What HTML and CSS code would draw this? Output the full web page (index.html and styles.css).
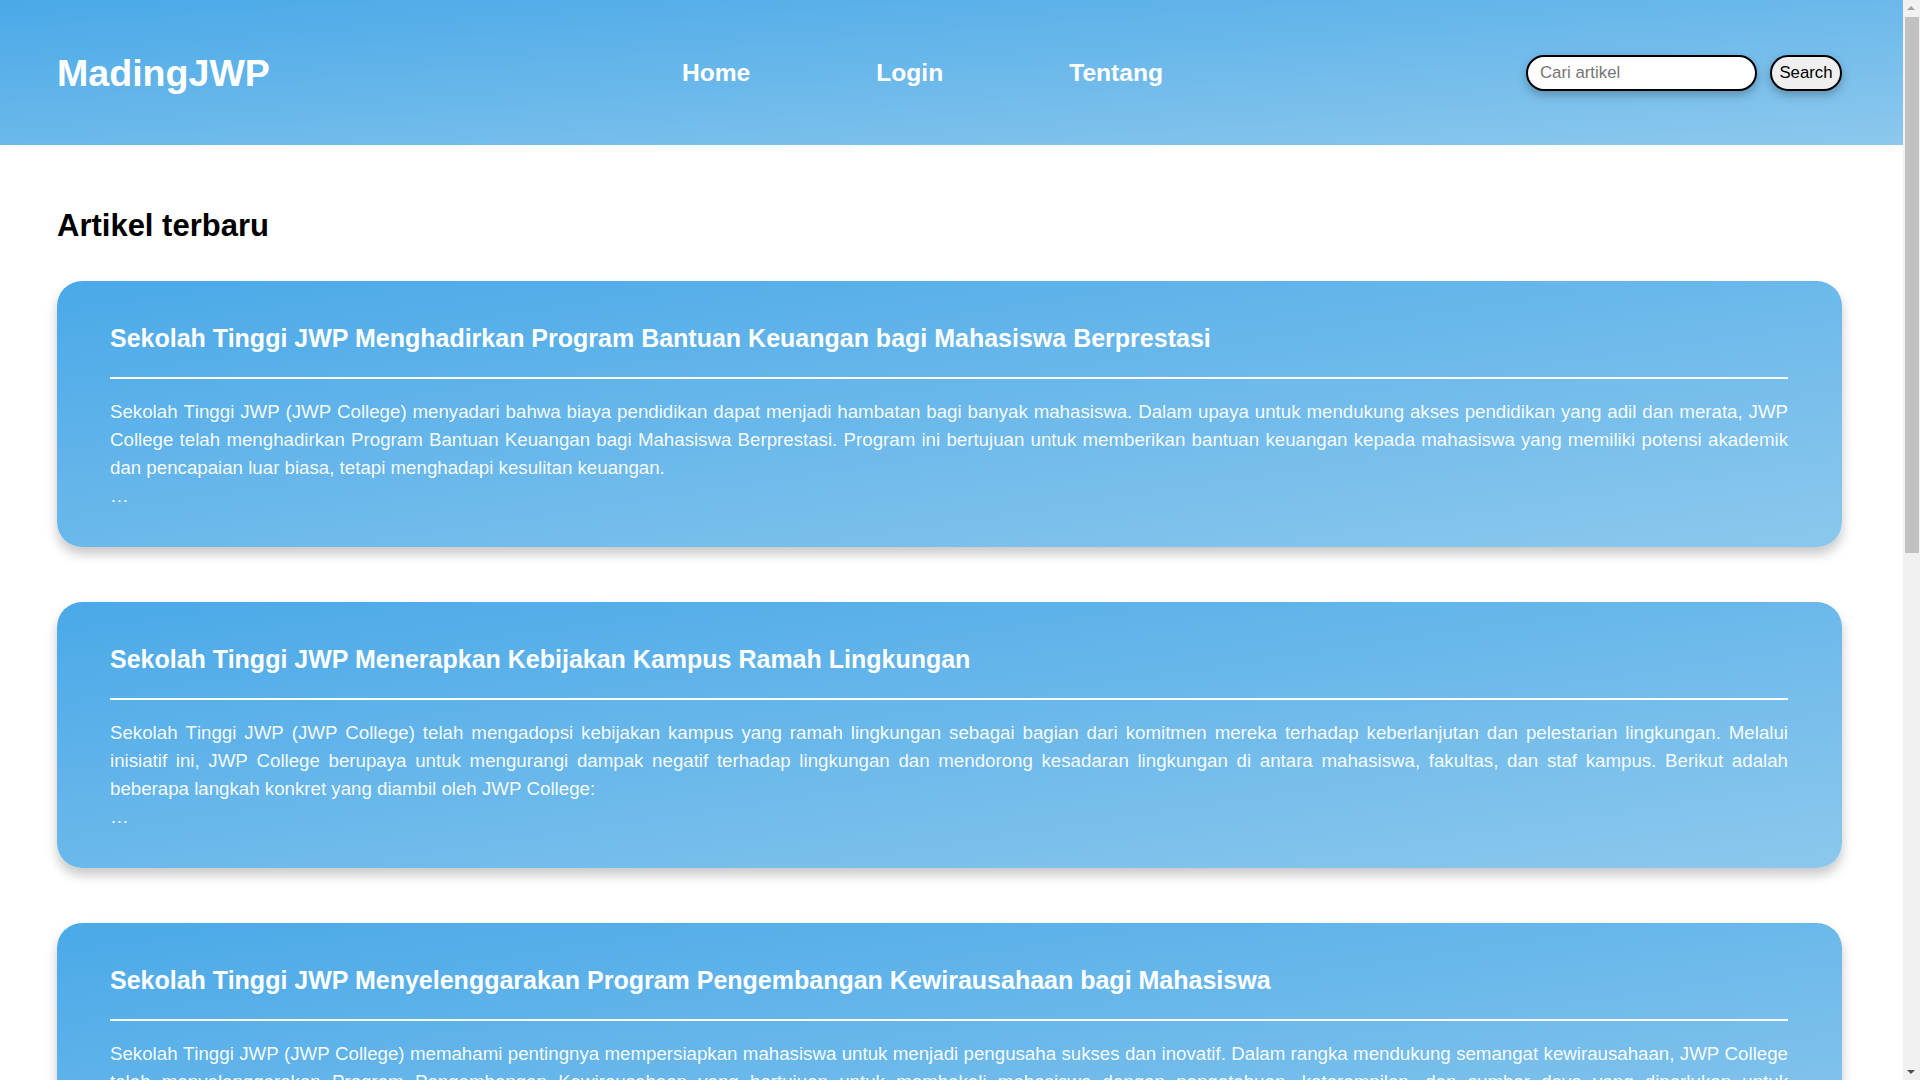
FILE: index.html
```html
<!DOCTYPE html>
<html lang="id">
<head>
<meta charset="utf-8">
<title>MadingJWP</title>
<link rel="stylesheet" href="styles.css">
</head>
<body>
<header class="site-header">
  <a class="logo" href="#">MadingJWP</a>
  <nav class="main-nav">
    <a href="#">Home</a>
    <a href="#">Login</a>
    <a href="#">Tentang</a>
  </nav>
  <form class="search" onsubmit="return false">
    <input class="search-input" type="text" placeholder="Cari artikel">
    <button class="search-btn" type="submit">Search</button>
  </form>
</header>

<main class="content">
  <h1 class="section-title">Artikel terbaru</h1>

  <article class="card">
    <h2 class="card-title">Sekolah Tinggi JWP Menghadirkan Program Bantuan Keuangan bagi Mahasiswa Berprestasi</h2>
    <hr class="card-rule">
    <p class="card-text">Sekolah Tinggi JWP (JWP College) menyadari bahwa biaya pendidikan dapat menjadi hambatan bagi banyak mahasiswa. Dalam upaya untuk mendukung akses pendidikan yang adil dan merata, JWP College telah menghadirkan Program Bantuan Keuangan bagi Mahasiswa Berprestasi. Program ini bertujuan untuk memberikan bantuan keuangan kepada mahasiswa yang memiliki potensi akademik dan pencapaian luar biasa, tetapi menghadapi kesulitan keuangan.<br>&hellip;</p>
  </article>

  <article class="card">
    <h2 class="card-title">Sekolah Tinggi JWP Menerapkan Kebijakan Kampus Ramah Lingkungan</h2>
    <hr class="card-rule">
    <p class="card-text">Sekolah Tinggi JWP (JWP College) telah mengadopsi kebijakan kampus yang ramah lingkungan sebagai bagian dari komitmen mereka terhadap keberlanjutan dan pelestarian lingkungan. Melalui inisiatif ini, JWP College berupaya untuk mengurangi dampak negatif terhadap lingkungan dan mendorong kesadaran lingkungan di antara mahasiswa, fakultas, dan staf kampus. Berikut adalah beberapa langkah konkret yang diambil oleh JWP College:<br>&hellip;</p>
  </article>

  <article class="card">
    <h2 class="card-title">Sekolah Tinggi JWP Menyelenggarakan Program Pengembangan Kewirausahaan bagi Mahasiswa</h2>
    <hr class="card-rule">
    <p class="card-text">Sekolah Tinggi JWP (JWP College) memahami pentingnya mempersiapkan mahasiswa untuk menjadi pengusaha sukses dan inovatif. Dalam rangka mendukung semangat kewirausahaan, JWP College telah menyelenggarakan Program Pengembangan Kewirausahaan yang bertujuan untuk membekali mahasiswa dengan pengetahuan, keterampilan, dan sumber daya yang diperlukan untuk mengembangkan dan menjalankan usaha mereka sendiri.<br>&hellip;</p>
  </article>

  <article class="card">
    <h2 class="card-title">Sekolah Tinggi JWP Menjalin Kerja Sama dengan Industri Lokal</h2>
    <hr class="card-rule">
    <p class="card-text">Sekolah Tinggi JWP (JWP College) terus memperluas jaringan kerja sama dengan berbagai perusahaan dan industri lokal. Melalui kemitraan ini, mahasiswa mendapatkan kesempatan magang, proyek kolaboratif, serta pengalaman langsung di dunia kerja yang akan memperkuat kesiapan mereka setelah lulus dari kampus.<br>&hellip;</p>
  </article>

  <article class="card">
    <h2 class="card-title">Sekolah Tinggi JWP Meluncurkan Perpustakaan Digital untuk Mahasiswa</h2>
    <hr class="card-rule">
    <p class="card-text">Sekolah Tinggi JWP (JWP College) meluncurkan perpustakaan digital yang dapat diakses oleh seluruh mahasiswa kapan saja dan di mana saja. Perpustakaan ini menyediakan ribuan buku elektronik, jurnal ilmiah, dan materi pembelajaran yang mendukung kegiatan akademik mahasiswa dan dosen.<br>&hellip;</p>
  </article>
</main>

<div class="fake-scrollbar" aria-hidden="true">
  <div class="sb-arrow sb-up"></div>
  <div class="sb-thumb"></div>
  <div class="sb-arrow sb-down"></div>
</div>
</body>
</html>
```

FILE: styles.css
```css
html, body {
  margin: 0;
  padding: 0;
}

body {
  font-family: "Liberation Sans", Arial, Helvetica, sans-serif;
  background: #ffffff;
  color: #000000;
  margin-right: 17px;
}

.site-header {
  height: 145px;
  display: flex;
  align-items: center;
  padding: 0 61px 0 57px;
  background: linear-gradient(to bottom right, #4aa9e8 0%, #8cc8ed 100%);
}

.logo {
  font-size: 37.6px;
  font-weight: bold;
  color: #ffffff;
  text-decoration: none;
  line-height: 44px;
}

.main-nav {
  display: flex;
  gap: 126px;
  margin-left: 412px;
}

.main-nav a {
  font-size: 24.6px;
  font-weight: bold;
  color: #ffffff;
  text-decoration: none;
  line-height: 28px;
}

.search {
  margin-left: auto;
  display: flex;
  align-items: center;
  gap: 13px;
}

.search-input {
  box-sizing: border-box;
  width: 231px;
  height: 36px;
  border: 2px solid #000000;
  border-radius: 18px;
  padding: 0 12px;
  font-family: "Liberation Sans", Arial, sans-serif;
  font-size: 16.8px;
  background: #ffffff;
  box-shadow: 0 4px 10px rgba(0, 0, 0, 0.25);
  outline: none;
}

.search-input::placeholder {
  color: #757575;
}

.search-btn {
  box-sizing: border-box;
  width: 72px;
  height: 36px;
  border: 2px solid #000000;
  border-radius: 18px;
  padding: 0;
  background: #efefef;
  font-family: "Liberation Sans", Arial, sans-serif;
  font-size: 16.8px;
  color: #000000;
  box-shadow: 0 4px 10px rgba(0, 0, 0, 0.25);
  cursor: pointer;
}

.content {
  padding: 0 61px 80px 57px;
}

.section-title {
  margin: 63px 0 37px;
  font-size: 31px;
  line-height: 36px;
  font-weight: bold;
}

.card {
  padding: 43px 54px 37px 53px;
  margin-bottom: 55px;
  border-radius: 25px;
  background: linear-gradient(to bottom right, #4aa9e8 0%, #8cc8ed 100%);
  box-shadow: 0 7px 12px rgba(0, 0, 0, 0.22);
  color: #ffffff;
}

.card-title {
  margin: 0;
  font-size: 25px;
  line-height: 28px;
  font-weight: bold;
}

.card-rule {
  margin: 25px 0 0;
  height: 2px;
  border: none;
  background: #ffffff;
}

.card-text {
  margin: 19px 0 0;
  font-size: 18.7px;
  font-kerning: none;
  line-height: 28px;
  text-align: justify;
  color: rgba(255, 255, 255, 0.96);
}

/* classic scrollbar drawn over the right edge of the window */
.fake-scrollbar {
  position: fixed;
  top: 0;
  right: 0;
  width: 17px;
  height: 100vh;
  background: #f1f1f1;
  display: flex;
  flex-direction: column;
}

.sb-arrow {
  height: 17px;
  flex: none;
  position: relative;
}

.sb-arrow::after {
  content: "";
  position: absolute;
  left: 4px;
  width: 0;
  height: 0;
  border-left: 4px solid transparent;
  border-right: 4px solid transparent;
}

.sb-up::after {
  top: 6px;
  border-bottom: 4px solid #a3a3a3;
}

.sb-down {
  margin-top: auto;
}

.sb-down::after {
  top: 7px;
  border-top: 4px solid #505050;
}

.sb-thumb {
  margin: 0 1px 0 2px;
  height: 536px;
  background: #c1c1c1;
}
```
